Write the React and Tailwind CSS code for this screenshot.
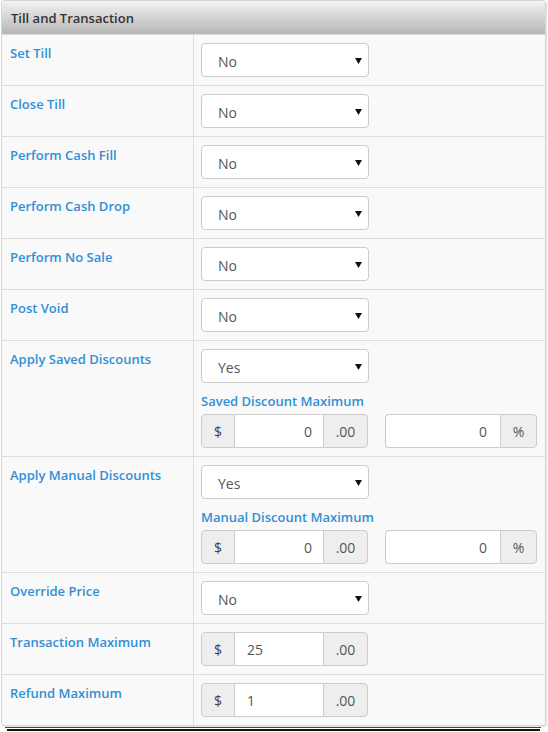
import React from "react";

const LABEL = "text-[13px] font-semibold leading-[18px] text-[#3090d6]";

function Select({ value }) {
  return (
    <div className="relative flex h-[34px] w-[168px] items-center rounded-[4px] border border-[#cccccc] bg-white pl-[16px] pt-[2px] text-[14px] text-[#555555]">
      {value}
      <svg className="absolute right-[6px] top-[14px]" width="7" height="6" viewBox="0 0 7 6">
        <polygon points="0,0 7,0 3.5,6" fill="#111" />
      </svg>
    </div>
  );
}

function MoneyGroup({ value, align = "right" }) {
  return (
    <div className="flex h-[34px] w-[167px] text-[14px] text-[#555555]">
      <div className="flex w-[34px] items-center justify-center rounded-l-[4px] border border-[#cccccc] bg-[#eeeeee] text-[#4a3a55]">$</div>
      <div
        className={
          "flex w-[88px] items-center border-y border-[#cccccc] bg-white " +
          (align === "right" ? "justify-end pr-[11px]" : "justify-start pl-[12px]")
        }
      >
        {value}
      </div>
      <div className="flex w-[45px] items-center justify-center rounded-r-[4px] border border-[#cccccc] bg-[#eeeeee]">.00</div>
    </div>
  );
}

function PercentGroup({ value }) {
  return (
    <div className="flex h-[34px] w-[152px] text-[14px] text-[#555555]">
      <div className="flex w-[115px] items-center justify-end rounded-l-[4px] border border-r-0 border-[#cccccc] bg-white pr-[13px]">
        {value}
      </div>
      <div className="flex w-[37px] items-center justify-center rounded-r-[4px] border border-[#cccccc] bg-[#eeeeee]">%</div>
    </div>
  );
}

function Row({ label, children, last }) {
  return (
    <div className={"flex " + (last ? "" : "border-b border-[#dddddd]")}>
      <div className={"w-[192px] shrink-0 border-r border-[#dddddd] px-[8px] pt-[9px] pb-[8px] " + LABEL}>{label}</div>
      <div className="flex-1 px-[7px] py-[8px]">{children}</div>
    </div>
  );
}

function DiscountCell({ sub }) {
  return (
    <div>
      <Select value="Yes" />
      <div className={"mt-[9px] mb-[4px] " + LABEL}>{sub}</div>
      <div className="flex gap-[17px]">
        <MoneyGroup value="0" />
        <PercentGroup value="0" />
      </div>
    </div>
  );
}

export default function App() {
  return (
    <div
      className="relative h-[732px] w-[548px] bg-white"
      style={{ fontFamily: '"Open Sans", "Noto Sans", sans-serif' }}
    >
      <div className="ml-[1px] w-[545px] overflow-hidden rounded-[3px] border border-[#d6d6d6] bg-[#f9f9f9] shadow-[1px_1px_1px_rgba(0,0,0,0.12)]">
        <div className="h-[34px] border-b border-[#dcdcdc] bg-gradient-to-b from-[#f3f3f3] to-[#b6b6b6] px-[9px] py-[8px] text-[13px] font-semibold leading-[18px] text-[#333333]">
          Till and Transaction
        </div>
        <Row label="Set Till"><Select value="No" /></Row>
        <Row label="Close Till"><Select value="No" /></Row>
        <Row label="Perform Cash Fill"><Select value="No" /></Row>
        <Row label="Perform Cash Drop"><Select value="No" /></Row>
        <Row label="Perform No Sale"><Select value="No" /></Row>
        <Row label="Post Void"><Select value="No" /></Row>
        <Row label="Apply Saved Discounts"><DiscountCell sub="Saved Discount Maximum" /></Row>
        <Row label="Apply Manual Discounts"><DiscountCell sub="Manual Discount Maximum" /></Row>
        <Row label="Override Price"><Select value="No" /></Row>
        <Row label="Transaction Maximum"><MoneyGroup value="25" align="left" /></Row>
        <Row label="Refund Maximum" last><MoneyGroup value="1" align="left" /></Row>
      </div>
      <div className="ml-[5px] mt-[1px] h-[1px] w-[536px] bg-[#444444]" />
      <div className="ml-[7px] mt-[1px] h-[2px] w-[533px] bg-[#111111]" />
    </div>
  );
}
